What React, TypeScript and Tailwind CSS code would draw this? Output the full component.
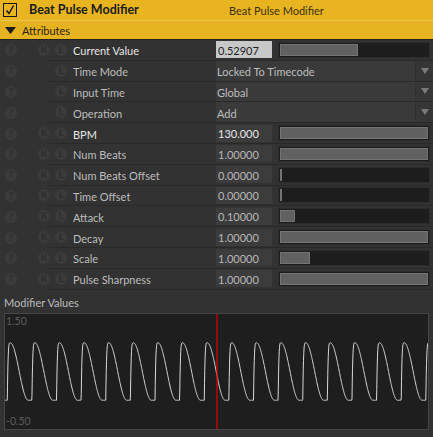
import React from 'react';

type Row =
  | { kind: 'num'; label: string; value: string; fill: number; k?: boolean; bright?: boolean; active?: boolean }
  | { kind: 'enum'; label: string; value: string };

const rows: Row[] = [
  { kind: 'num', label: 'Current Value', value: '0.52907', fill: 0.529, k: true, bright: true, active: true },
  { kind: 'enum', label: 'Time Mode', value: 'Locked To Timecode' },
  { kind: 'enum', label: 'Input Time', value: 'Global' },
  { kind: 'enum', label: 'Operation', value: 'Add' },
  { kind: 'num', label: 'BPM', value: '130.000', fill: 1, k: true, bright: true },
  { kind: 'num', label: 'Num Beats', value: '1.00000', fill: 1, k: true },
  { kind: 'num', label: 'Num Beats Offset', value: '0.00000', fill: 0, k: true },
  { kind: 'num', label: 'Time Offset', value: '0.00000', fill: 0, k: true },
  { kind: 'num', label: 'Attack', value: '0.10000', fill: 0.1, k: true },
  { kind: 'num', label: 'Decay', value: '1.00000', fill: 1, k: true },
  { kind: 'num', label: 'Scale', value: '1.00000', fill: 0.2, k: true },
  { kind: 'num', label: 'Pulse Sharpness', value: '1.00000', fill: 1, k: true },
];

function Dot({ ch }: { ch: string }) {
  return (
    <div className="w-[12px] h-[12px] rounded-full bg-[#3b3b3b] text-[#2c2c2c] text-[9px] font-bold leading-[12px] text-center shrink-0">
      {ch}
    </div>
  );
}

function Wave() {
  const W = 423;
  const H = 115;
  const period = 24.62;
  const start = 2.3;
  const pts: string[] = [];
  const val = (x: number) => {
    let t = ((x - start) / period) % 1;
    if (t < 0) t += 1;
    const a = 0.12;
    const d = 0.73;
    if (t < a) return 1 - Math.pow(1 - t / a, 4);
    if (t < a + d) return 0.5 + 0.5 * Math.cos((Math.PI * (t - a)) / d);
    return 0;
  };
  for (let x = 0; x <= W; x += 0.25) {
    const v = val(x);
    pts.push(`${x.toFixed(2)},${((1.5 - v) * 57.5).toFixed(2)}`);
  }
  return (
    <svg width={W} height={H} viewBox={`0 0 ${W} ${H}`} className="absolute inset-0">
      <polyline points={pts.join(' ')} fill="none" stroke="#d8d8d8" strokeWidth="1" />
      <line x1="212" y1="0" x2="212" y2={H} stroke="#e00000" strokeWidth="1.2" />
    </svg>
  );
}

export default function App() {
  return (
    <div className="w-[433px] h-[437px] bg-[#323232] overflow-hidden text-[11px] leading-none" style={{ fontFamily: 'Lato, "Noto Sans", sans-serif' }}>
      {/* header */}
      <div className="h-[20px] bg-[#e8b521] flex items-center">
        <div className="ml-[3px] w-[14px] h-[14px] border-[1.5px] border-[#141414] flex items-center justify-center">
          <svg width="12" height="12" viewBox="0 0 12 12">
            <path d="M2.5 6.5 L5 9.5 L9.5 1.5" fill="none" stroke="#111" strokeWidth="1.4" />
          </svg>
        </div>
        <span className="ml-[12px] w-[200px] font-bold text-[#1b1b1b] text-[12.5px] pt-[1px]">Beat Pulse Modifier</span>
        <span className="text-[#3b2f0e] text-[11px] pt-[1px]">Beat Pulse Modifier</span>
      </div>
      <div className="h-[19px] bg-[#e6b320] border-t border-[#edc451] flex items-center">
        <svg width="11" height="7" viewBox="0 0 11 7" className="ml-[5px]">
          <path d="M0 0 L11 0 L5.5 7 Z" fill="#1c1c1c" />
        </svg>
        <span className="ml-[6px] text-[#2a220c] text-[11px] pt-[1px]">Attributes</span>
      </div>
      <div className="h-[1px] bg-[#222]" />

      {/* attribute rows */}
      <div>
        {rows.map((r, i) => (
          <div key={i} className="flex h-[20.8px]">
            <div className="w-[47px] shrink-0 flex items-center pl-[5px]">
              <Dot ch="?" />
            </div>
            <div className="flex-1 flex items-center border-b border-[#292929]">
              <div className="w-[12px] -ml-[9px] shrink-0">{r.kind === 'num' && r.k && <Dot ch="K" />}</div>
              <div className="ml-[5px]"><Dot ch="L" /></div>
              <span className={`ml-[6px] pt-[2px] w-[143px] shrink-0 ${r.kind === 'num' && r.bright ? 'text-[#e6e6e6]' : 'text-[#bdbdbd]'}`}>{r.label}</span>
              {r.kind === 'num' ? (
                <>
                  <div className={`w-[56px] h-[17px] shrink-0 flex items-center pl-[2px] pt-[1px] ${r.active ? 'bg-[#c8c8c8] text-[#1e1e1e]' : 'bg-[#3c3c3c] ' + (r.bright ? 'text-[#e6e6e6]' : 'text-[#b8b8b8]')}`}>
                    {r.value}
                  </div>
                  <div className="ml-[6px] mr-[3px] flex-1 h-[16px] bg-[#1d1d1d] border border-[#2c2c2c] p-[1px]">
                    <div
                      className="h-full bg-[#616161] border border-[#747474]"
                      style={{ width: r.fill === 0 ? '1px' : `${r.fill * 100}%` }}
                    />
                  </div>
                </>
              ) : (
                <div className="flex-1 h-full flex">
                  <div className="flex-1 bg-[#3a3a3a] text-[#bdbdbd] flex items-center pl-[1px] pt-[2px]">{r.value}</div>
                  <div className="w-[17px] ml-[1px] bg-[#363636] flex items-center justify-center">
                    <svg width="8" height="6" viewBox="0 0 8 6">
                      <path d="M0 0 L8 0 L4 6 Z" fill="#7a7a7a" />
                    </svg>
                  </div>
                </div>
              )}
            </div>
          </div>
        ))}
      </div>

      {/* graph */}
      <div className="pt-[6px] pl-[4px] text-[#bcbcbc] h-[20px] flex items-center">Modifier Values</div>
      <div className="ml-[4px] mt-[3px] w-[425px] h-[117px] border border-[#464646] bg-[#1e1e1e] relative">
        <Wave />
        <span className="absolute left-[1px] top-[2px] text-[10.5px] text-[#5c5c5c]">1.50</span>
        <span className="absolute left-[1px] bottom-[2px] text-[10.5px] text-[#5c5c5c]">-0.50</span>
      </div>
    </div>
  );
}
